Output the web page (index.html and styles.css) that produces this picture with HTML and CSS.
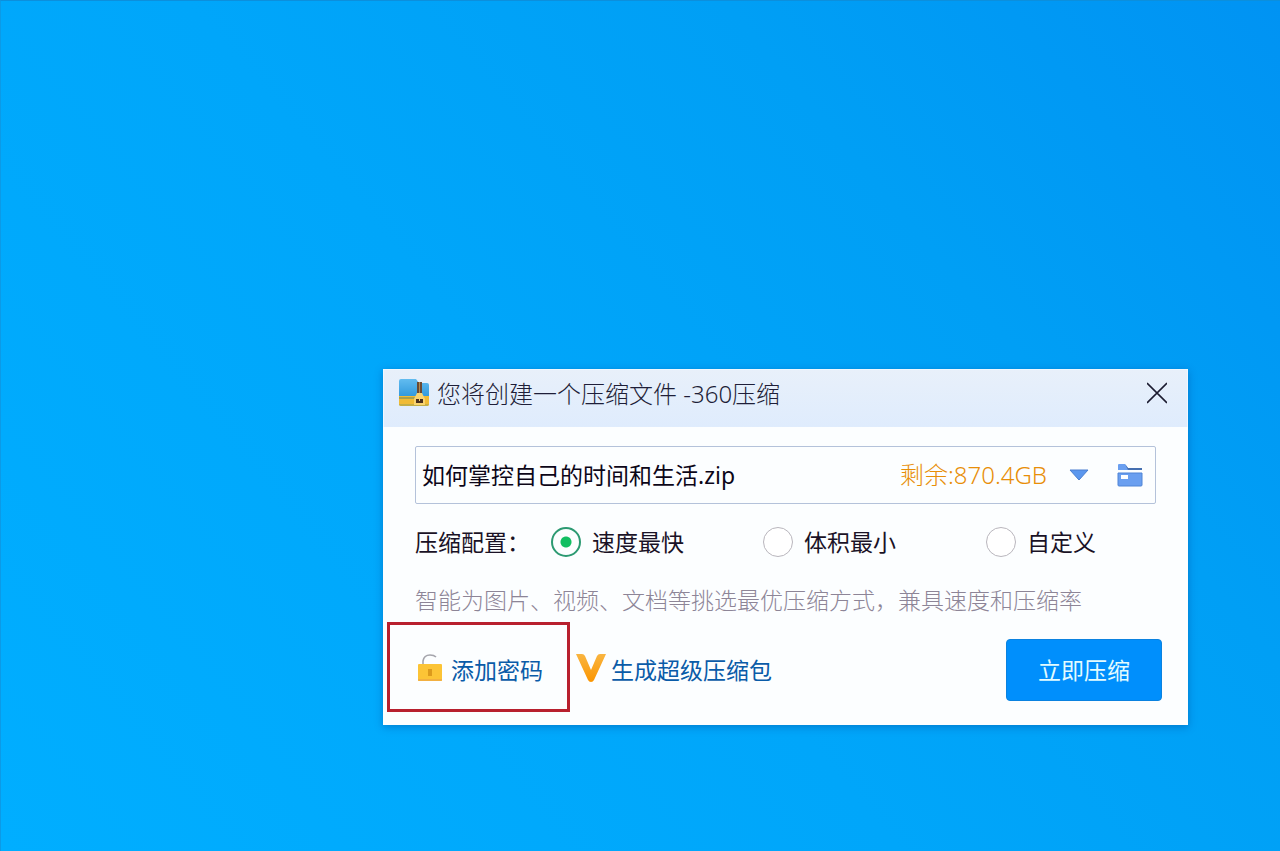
FILE: index.html
```html
<!DOCTYPE html>
<html lang="zh-CN">
  <head>
    <meta charset="UTF-8" />
    <title>您将创建一个压缩文件 -360压缩</title>
    <link rel="stylesheet" href="styles.css">
  </head>
  <body>
    <main class="desktop">
      <form class="window">
        <header class="titlebar">
          <svg class="app-icon" viewBox="0 0 32 28" aria-hidden="true">
            <defs>
              <linearGradient id="folder" x1="0" y1="0" x2="0" y2="1">
                <stop offset="0" stop-color="#62bcf0" />
                <stop offset="1" stop-color="#2f98dc" />
              </linearGradient>
            </defs>
            <path d="M1 3q0-2 2-2h15l3 4h8q2 0 2 2v12H1z" fill="url(#folder)" />
            <path d="M1 18h30v8q0 2-2 2H3q-2 0-2-2z" fill="#f0bb35" />
            <path d="M1 19h16v2H1z" fill="#a9a04c" />
            <path d="M1 26h30q0 2-2 2H3q-2 0-2-2z" fill="#c3ae46" />
            <path d="M19 4h5v14h-5z" fill="#6b4a33" />
            <path d="M21 4h1v13h-1z" fill="#b58a50" />
            <path d="M19 15h5l3 6v6H16v-6z" fill="#f9d470" />
            <path d="M18 21h7v4h-7z" fill="#4a2f1c" />
            <path d="M21 21h1v2h-1z" fill="#f7cf6a" />
          </svg>
          <h1 class="title">您将创建一个压缩文件 -360压缩</h1>
          <button class="icon-button close" type="button" aria-label="关闭">
            <svg width="20" height="22" viewBox="0 0 20 22">
              <path d="M0 1l20 20M20 1L0 21" fill="none" stroke="#1c1c30" stroke-width="1.6" />
            </svg>
          </button>
        </header>

        <div class="content">
          <div class="file-field">
            <input class="file-name" type="text" aria-label="文件名" value="如何掌控自己的时间和生活.zip" />
            <span class="free-space">剩余:870.4GB</span>
            <button class="icon-button" type="button" aria-label="历史路径">
              <svg width="20" height="12" viewBox="0 0 20 12">
                <path d="M1 1h18l-9 10z" fill="#5b97ee" stroke="#4a7fd0" stroke-width="1" />
              </svg>
            </button>
            <button class="icon-button folder" type="button" aria-label="选择文件夹">
              <svg width="26" height="24" viewBox="0 0 26 24">
                <path d="M1 7V2q0-1 1-1h6l3 4h14v2z" fill="#6a9ff0" />
                <path d="M8 1l3 4h14v2H11z" fill="#456fb0" />
                <path d="M1 10h24v12q0 1-1 1H2q-1 0-1-1z" fill="#6a9ff0" stroke="#4f84d6" stroke-width="1" />
                <path d="M4 12h7v4H4z" fill="#fff" />
              </svg>
            </button>
          </div>

          <div class="options" role="radiogroup" aria-labelledby="optionsLabel">
            <span id="optionsLabel">压缩配置：</span>
            <label class="option"><input type="radio" name="config" value="fast" checked />速度最快</label>
            <label class="option"><input type="radio" name="config" value="small" />体积最小</label>
            <label class="option"><input type="radio" name="config" value="custom" />自定义</label>
          </div>

          <p class="hint">智能为图片、视频、文档等挑选最优压缩方式，兼具速度和压缩率</p>
        </div>

        <footer class="actions">
          <div class="marked">
            <a class="action" href="#password">
              <svg width="26" height="28" viewBox="0 0 26 28" aria-hidden="true">
                <path d="M6 11V7q1-6 7-6 4 0 6 2" fill="none" stroke="#a5a5ac" stroke-width="1.6" />
                <rect x="1" y="10" width="24" height="17" rx="1" fill="#fcc436" />
                <path d="M1 25h24v1q0 1-1 1H2q-1 0-1-1z" fill="#f2b041" />
                <path d="M11 15h4v7h-4z" fill="#dc9a1c" />
              </svg>
              添加密码
            </a>
          </div>
          <a class="action super" href="#super">
            <svg width="30" height="28" viewBox="0 0 30 28" aria-hidden="true">
              <defs>
                <linearGradient id="vip" x1="0" y1="0" x2="0" y2="1">
                  <stop offset="0" stop-color="#f9b541" />
                  <stop offset="1" stop-color="#fb9500" />
                </linearGradient>
              </defs>
              <path d="M0 0h6q2 0 3 2l6 14 6-14q1-2 3-2h6L18 26q-1 2-3 2t-3-2z" fill="url(#vip)" />
            </svg>
            生成超级压缩包
          </a>
          <button class="submit" type="submit">立即压缩</button>
        </footer>
      </form>
    </main>
  </body>
</html>
```
FILE: styles.css
```css
body {
  margin: 0;
  font-family: 'Noto Sans', 'Noto Sans CJK SC', sans-serif;
  font-size: 23px;
  line-height: 32px;
  color: #1a1226;
}

input,
button {
  font: inherit;
  color: inherit;
}

svg {
  display: block;
  flex: none;
}

.desktop {
  position: relative;
  box-sizing: border-box;
  min-height: 100vh;
  border-top: 1px solid #0c8fdc;
  border-left: 1px solid #0c9ae6;
  background: linear-gradient(50deg, #00aeff 0%, #00a6fa 45%, #009ff5 72%, #0093f3 100%);
}

.window {
  position: absolute;
  top: 368px;
  left: 382px;
  right: 92px;
  background: #fcfeff;
  box-shadow: 0 2px 8px rgba(0, 50, 130, 0.35);
}

/* title bar */
.titlebar {
  display: flex;
  align-items: flex-start;
  box-sizing: border-box;
  height: 58px;
  padding: 8px 20px 0 14px;
  border: solid #f0f8ff;
  border-width: 1px 1px 0;
  background: linear-gradient(#e8f0fa, #dfecfd);
}

.app-icon {
  width: 32px;
  height: 28px;
}

.title {
  flex: 1;
  margin: 0 0 0 7px;
  font-size: 24px;
  font-weight: 300;
  color: #1e1e38;
}

.icon-button {
  padding: 0;
  border: 0;
  background: none;
  cursor: pointer;
}

.close {
  padding-top: 4px;
}

/* file name, options, hint */
.content {
  padding: 19px 32px 0;
}

.file-field {
  display: flex;
  align-items: center;
  box-sizing: border-box;
  height: 58px;
  padding: 0 12px 0 6px;
  border: 1px solid #b4c2da;
  border-radius: 2px;
}

.file-name {
  flex: 1;
  min-width: 0;
  padding: 0;
  border: 0;
  outline: 0;
  background: none;
  color: #0c0618;
}

.free-space {
  margin-right: 22px;
  font-size: 24px;
  font-weight: 300;
  color: #e88e08;
}

.folder {
  margin-left: 28px;
}

.options {
  display: grid;
  grid-template-columns: 136px 212px 223px 1fr;
  align-items: center;
  margin-top: 22px;
}

.option {
  display: flex;
  align-items: center;
  gap: 11px;
}

.option input {
  appearance: none;
  flex: none;
  width: 30px;
  height: 30px;
  margin: 0;
  border: 1px solid #b9b6bd;
  border-radius: 50%;
  background: #fff;
}

.option input:checked {
  border: 2px solid #2c9a72;
  background: radial-gradient(circle, #12bf62 5px, transparent 6px);
}

.hint {
  margin: 26px 0 0;
  font-weight: 300;
  color: #8d8597;
}

/* bottom row */
.actions {
  display: flex;
  align-items: flex-start;
  margin-top: 6px;
  padding: 0 26px 13px 4px;
}

.marked {
  padding: 29px 24px 23px 27px;
  border: 3px solid #b8202e;
}

.action {
  display: flex;
  align-items: center;
  gap: 8px;
  color: #0a5ba8;
  text-decoration: none;
}

.action svg {
  margin-bottom: 4px;
}

.super {
  gap: 5px;
  margin: 32px 0 0 6px;
}

.submit {
  width: 156px;
  height: 62px;
  margin: 17px 0 0 auto;
  padding: 0;
  border: 1px solid #0a82e0;
  border-radius: 4px;
  background: #008ffc;
  color: #e2fbff;
  cursor: pointer;
}
```
